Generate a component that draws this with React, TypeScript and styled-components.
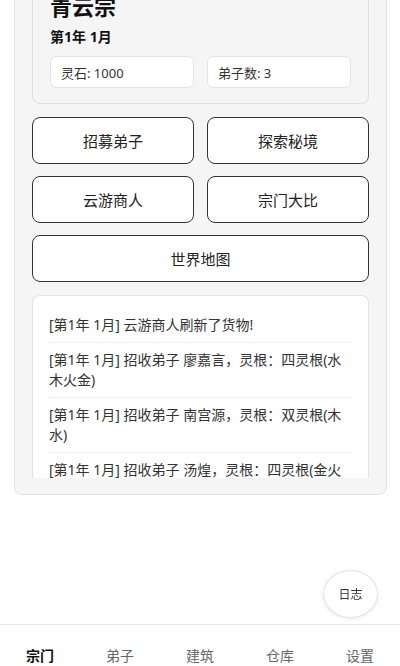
import React from "react";
import styled, { createGlobalStyle } from "styled-components";

const GlobalStyle = createGlobalStyle`
  html, body {
    margin: 0;
    padding: 0;
    background: #ffffff;
    font-family: "Noto Sans", "Noto Sans CJK SC", sans-serif;
    color: #222;
  }
  * { box-sizing: border-box; }
`;

const Page = styled.main`
  margin-top: -44px;
  padding: 0 13px 0 14px;
`;

const Panel = styled.section`
  background: #f5f5f5;
  border: 1px solid #e2e2e2;
  border-radius: 8px;
  padding: 17px 17px 16px;
  display: flex;
  flex-direction: column;
  gap: 12px;
`;

const InfoCard = styled.div`
  background: #f5f5f5;
  border: 1px solid #dedede;
  border-radius: 8px;
  padding: 16px 17px 15px;
`;

const Title = styled.h1`
  margin: 0 0 6px;
  font-size: 22px;
  line-height: 30px;
  font-weight: 700;
  color: #111;
`;

const DateLine = styled.div`
  font-size: 14px;
  line-height: 20px;
  font-weight: 700;
  color: #111;
  margin-bottom: 9px;
`;

const StatRow = styled.div`
  display: grid;
  grid-template-columns: 1fr 1fr;
  gap: 13px;
`;

const Stat = styled.div`
  height: 32px;
  background: #fff;
  border: 1px solid #e4e4e4;
  border-radius: 6px;
  padding: 0 10px;
  display: flex;
  align-items: center;
  font-size: 13px;
  color: #333;
`;

const ButtonGrid = styled.div`
  display: grid;
  grid-template-columns: 1fr 1fr;
  column-gap: 13px;
  row-gap: 12px;
  margin-top: 1px;
`;

const ActionButton = styled.button<{ $wide?: boolean }>`
  grid-column: ${(p) => (p.$wide ? "1 / span 2" : "auto")};
  height: 47px;
  background: #fff;
  border: 1px solid #333;
  border-radius: 8px;
  font-family: inherit;
  font-size: 15px;
  color: #222;
  cursor: pointer;
`;

const LogBox = styled.div`
  margin-top: 1px;
  height: 183px;
  overflow: hidden;
  background: #fff;
  border: 1px solid #e2e2e2;
  border-bottom: none;
  border-radius: 8px 8px 0 0;
  padding: 12px 16px 0;
`;

const LogEntry = styled.div`
  padding: 7px 0;
  font-size: 14px;
  line-height: 20px;
  color: #333;
  border-bottom: 1px solid #eeeeee;
`;

const LogButton = styled.button`
  position: fixed;
  right: 22px;
  bottom: 48px;
  width: 55px;
  height: 48px;
  border-radius: 50%;
  background: #fff;
  border: 1px solid #e4e4e4;
  box-shadow: 0 1px 4px rgba(0, 0, 0, 0.08);
  font-family: inherit;
  font-size: 12px;
  color: #333;
`;

const NavBar = styled.nav`
  position: fixed;
  left: 0;
  right: 0;
  bottom: 0;
  height: 42px;
  background: #fff;
  border-top: 1px solid #e6e6e6;
  display: grid;
  grid-template-columns: repeat(5, 1fr);
`;

const NavItem = styled.div<{ $active?: boolean }>`
  padding-top: 21px;
  text-align: center;
  font-size: 14px;
  line-height: 20px;
  font-weight: ${(p) => (p.$active ? 700 : 400)};
  color: ${(p) => (p.$active ? "#111" : "#666")};
`;

const logs = [
  "[第1年 1月] 云游商人刷新了货物!",
  "[第1年 1月] 招收弟子 廖嘉言，灵根：四灵根(水木火金)",
  "[第1年 1月] 招收弟子 南宫源，灵根：双灵根(木水)",
  "[第1年 1月] 招收弟子 汤煌，灵根：四灵根(金火土水)",
];

const tabs = ["宗门", "弟子", "建筑", "仓库", "设置"];

export default function App() {
  return (
    <>
      <GlobalStyle />
      <Page>
        <Panel>
          <InfoCard>
            <Title>青云宗</Title>
            <DateLine>第1年 1月</DateLine>
            <StatRow>
              <Stat>灵石: 1000</Stat>
              <Stat>弟子数: 3</Stat>
            </StatRow>
          </InfoCard>
          <ButtonGrid>
            <ActionButton>招募弟子</ActionButton>
            <ActionButton>探索秘境</ActionButton>
            <ActionButton>云游商人</ActionButton>
            <ActionButton>宗门大比</ActionButton>
            <ActionButton $wide>世界地图</ActionButton>
          </ButtonGrid>
          <LogBox>
            {logs.map((l, i) => (
              <LogEntry key={i}>{l}</LogEntry>
            ))}
          </LogBox>
        </Panel>
      </Page>
      <LogButton>日志</LogButton>
      <NavBar>
        {tabs.map((t, i) => (
          <NavItem key={t} $active={i === 0}>
            {t}
          </NavItem>
        ))}
      </NavBar>
    </>
  );
}
